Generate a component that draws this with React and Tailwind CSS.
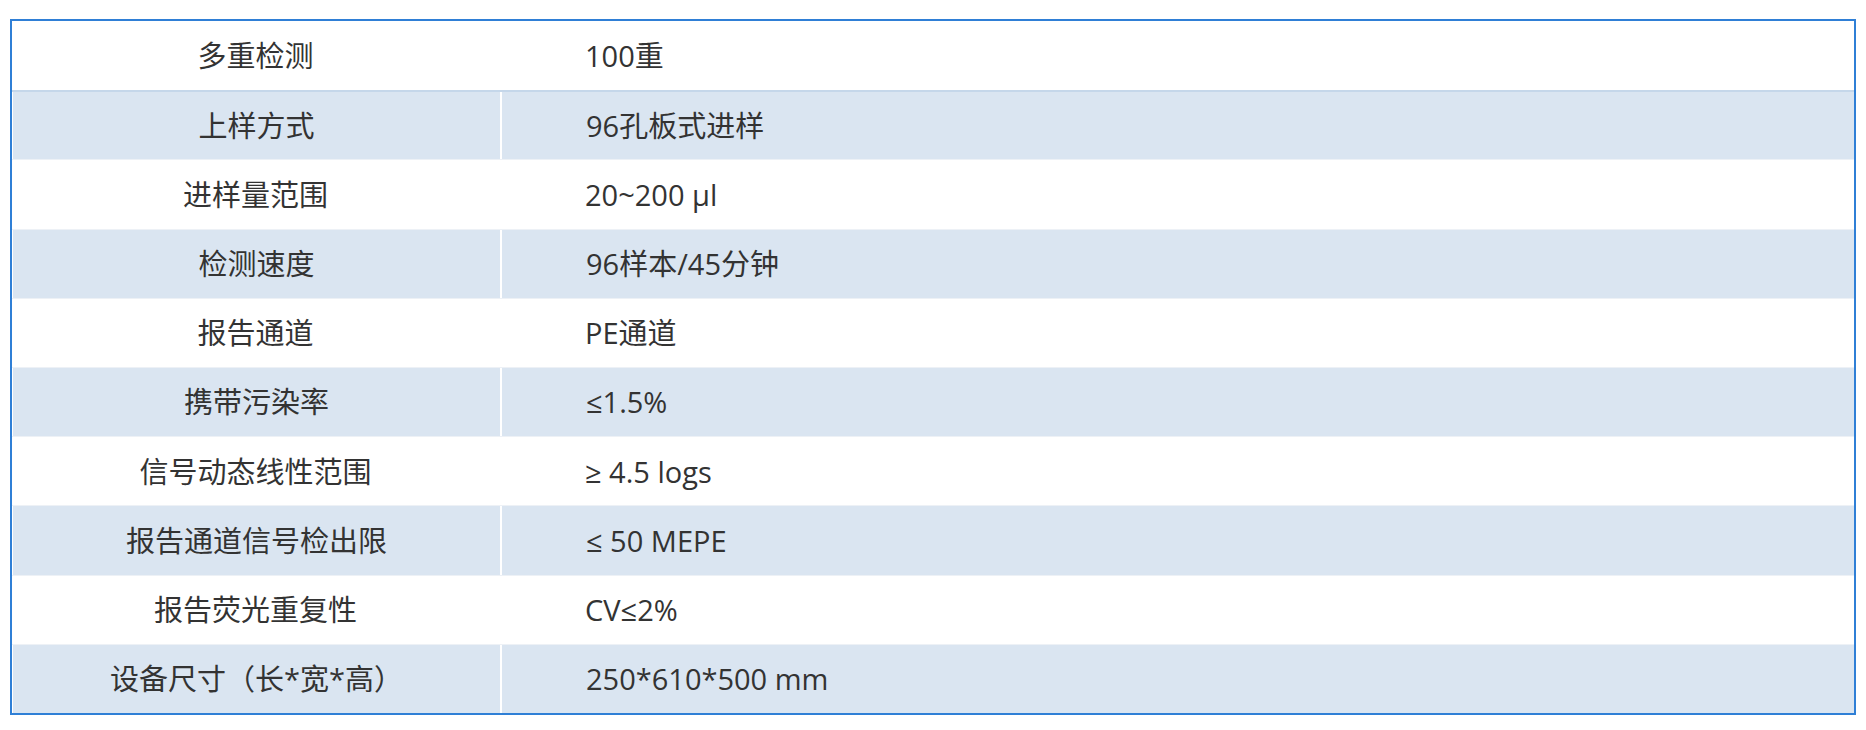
import React from 'react'

const rows = [
  ['多重检测', '100重'],
  ['上样方式', '96孔板式进样'],
  ['进样量范围', '20~200 μl'],
  ['检测速度', '96样本/45分钟'],
  ['报告通道', 'PE通道'],
  ['携带污染率', '≤1.5%'],
  ['信号动态线性范围', '≥ 4.5 logs'],
  ['报告通道信号检出限', '≤ 50 MEPE'],
  ['报告荧光重复性', 'CV≤2%'],
  ['设备尺寸（长*宽*高）', '250*610*500 mm'],
]

export default function App() {
  return (
    <div className="w-[1866px] h-[730px] bg-white pt-[19px] pl-[10px]">
      {/* spec table */}
      <div
        className="w-[1846px] h-[696px] border-2 border-[#2f7fd6] grid grid-rows-10 text-[29px] text-[#333333]"
        style={{ fontFamily: '"Open Sans", "Noto Sans CJK SC", sans-serif' }}
      >
        {rows.map(([label, value], idx) => {
          const shaded = idx % 2 === 1
          const line =
            idx === 0 ? '' : idx === 1 ? 'border-t-2 border-[#c5d7ea]' : 'border-t border-[#edf1f6]'
          return (
            <div key={idx} className={`flex ${line} ${shaded ? 'pl-px' : ''}`}>
              <div
                className={`w-[487px] flex items-center justify-center ${shaded ? 'bg-[#dae5f1]' : 'bg-white'}`}
              >
                {label}
              </div>
              <div className="w-[2px] bg-white" />
              <div
                className={`flex-1 flex items-center pl-[84px] ${shaded ? 'bg-[#dae5f1]' : 'bg-white'}`}
              >
                {value}
              </div>
            </div>
          )
        })}
      </div>
    </div>
  )
}
